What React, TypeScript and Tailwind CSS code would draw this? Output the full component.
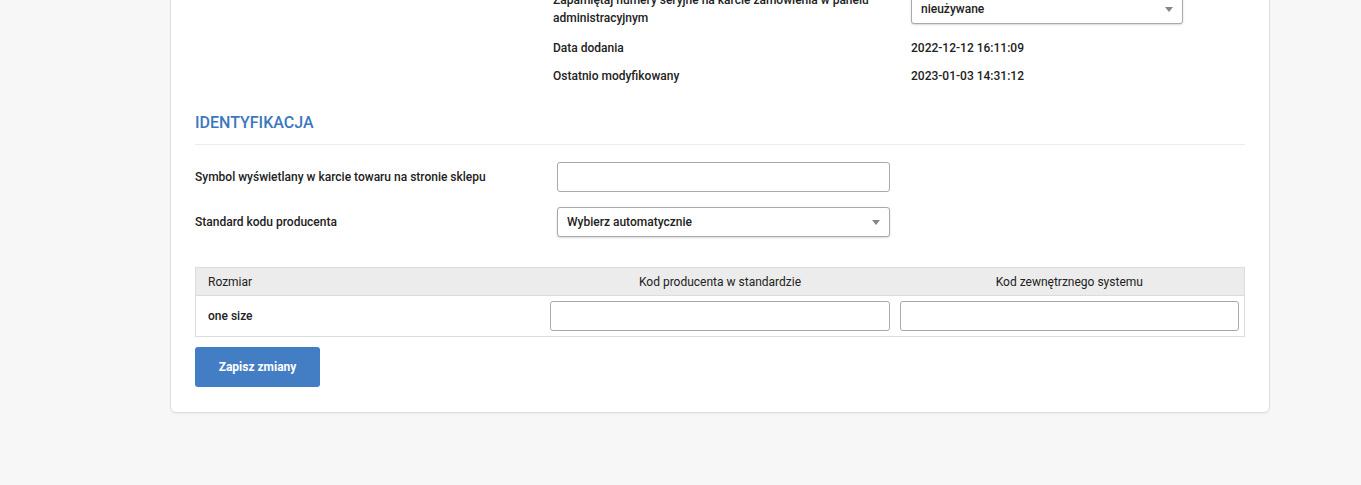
import React from "react";

const font = { fontFamily: "Roboto, 'Noto Sans', Arial, sans-serif" };

function Caret() {
  return (
    <svg width="8" height="5" viewBox="0 0 8 5" className="shrink-0">
      <polygon points="0,0 8,0 4,5" fill="#858585" />
    </svg>
  );
}

function FakeSelect({ value, className }: { value: string; className: string }) {
  return (
    <div
      className={`flex items-center justify-between h-[30px] pl-[9px] pr-[9px] bg-white border border-[#a9a9a9] rounded-[3px] shadow-[0_1px_2px_rgba(0,0,0,0.15)] ${className}`}
    >
      <span className="text-[12px] font-medium text-[#222]">{value}</span>
      <Caret />
    </div>
  );
}

function TextBox({ className }: { className: string }) {
  return <div className={`h-[30px] bg-white border border-[#a9a9a9] rounded-[3px] ${className}`} />;
}

export default function App() {
  return (
    <div className="h-[485px] overflow-hidden bg-[#f7f7f7]" style={font}>
      <div className="ml-[170px] w-[1100px] mt-[-39px] pt-[29px] pb-[25px] px-6 bg-white border border-[#dedede] rounded-md shadow-[0_1px_2px_rgba(0,0,0,0.05)]">
        {/* dane systemowe */}
        <div className="pl-[358px] text-[12px] font-medium text-[#222]">
          <div className="flex items-center h-[36px]">
            <div className="w-[358px] leading-[18px] pr-6">
              Zapamiętaj numery seryjne na karcie zamówienia w panelu administracyjnym
            </div>
            <FakeSelect value="nieużywane" className="w-[272px]" />
          </div>
          <div className="flex items-center h-[18px] mt-3">
            <div className="w-[358px]">Data dodania</div>
            <div>2022-12-12 16:11:09</div>
          </div>
          <div className="flex items-center h-[18px] mt-2.5">
            <div className="w-[358px]">Ostatnio modyfikowany</div>
            <div>2023-01-03 14:31:12</div>
          </div>
        </div>

        {/* identyfikacja */}
        <h2 className="mt-[29px] pb-[12px] border-b border-[#ececec] text-[16px] leading-[18px] font-medium text-[#3b78bf] uppercase">
          Identyfikacja
        </h2>

        <div className="mt-[17px] text-[12px] font-medium text-[#222]">
          <div className="flex items-center">
            <div className="w-[362px]">Symbol wyświetlany w karcie towaru na stronie sklepu</div>
            <TextBox className="w-[333px]" />
          </div>
          <div className="flex items-center mt-[15px]">
            <div className="w-[362px]">Standard kodu producenta</div>
            <FakeSelect value="Wybierz automatycznie" className="w-[333px]" />
          </div>
        </div>

        <div className="mt-[30px] border border-[#dcdcdc] text-[12px] text-[#222]">
          <div className="grid grid-cols-3 h-[28px] items-center bg-[#ececec] border-b border-[#dcdcdc]">
            <div className="pl-[12px]">Rozmiar</div>
            <div className="text-center">Kod producenta w standardzie</div>
            <div className="text-center">Kod zewnętrznego systemu</div>
          </div>
          <div className="grid grid-cols-3 items-center py-[5px]">
            <div className="pl-[12px] font-medium">one size</div>
            <div className="px-[5px]">
              <TextBox className="w-full" />
            </div>
            <div className="px-[5px]">
              <TextBox className="w-full" />
            </div>
          </div>
        </div>

        <button className="mt-[10px] h-[40px] w-[125px] rounded-[3px] bg-[#437dc4] text-white text-[12px] font-bold">
          Zapisz zmiany
        </button>
      </div>
    </div>
  );
}
